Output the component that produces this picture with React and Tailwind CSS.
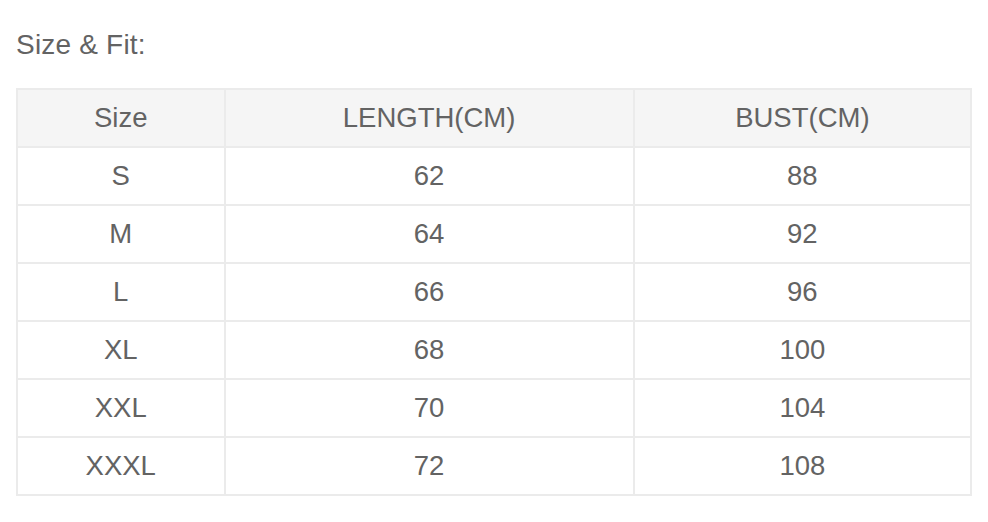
import React from 'react';

const rows = [
  ['S', '62', '88'],
  ['M', '64', '92'],
  ['L', '66', '96'],
  ['XL', '68', '100'],
  ['XXL', '70', '104'],
  ['XXXL', '72', '108'],
];

export default function App() {
  return (
    <div className="w-[988px] h-[522px] bg-white pl-[16px] pt-[28px] text-[#636363] font-['Liberation_Sans',Arial,sans-serif]">
      <div className="text-[28px] leading-[34px] h-[60px] tracking-[0.2px]">Size &amp; Fit:</div>
      <table className="w-[956px] border-collapse text-[27.5px] text-center">
        <colgroup>
          <col className="w-[208px]" />
          <col className="w-[410px]" />
          <col className="w-[338px]" />
        </colgroup>
        <thead>
          <tr className="bg-[#f5f5f5] h-[58px]">
            <th className="border-2 border-[#ebebeb] font-normal">Size</th>
            <th className="border-2 border-[#ebebeb] font-normal">LENGTH(CM)</th>
            <th className="border-2 border-[#ebebeb] font-normal">BUST(CM)</th>
          </tr>
        </thead>
        <tbody>
          {rows.map((r) => (
            <tr key={r[0]} className="h-[58px]">
              {r.map((c, i) => (
                <td key={i} className="border-2 border-[#ebebeb] p-0">{c}</td>
              ))}
            </tr>
          ))}
        </tbody>
      </table>
    </div>
  );
}
